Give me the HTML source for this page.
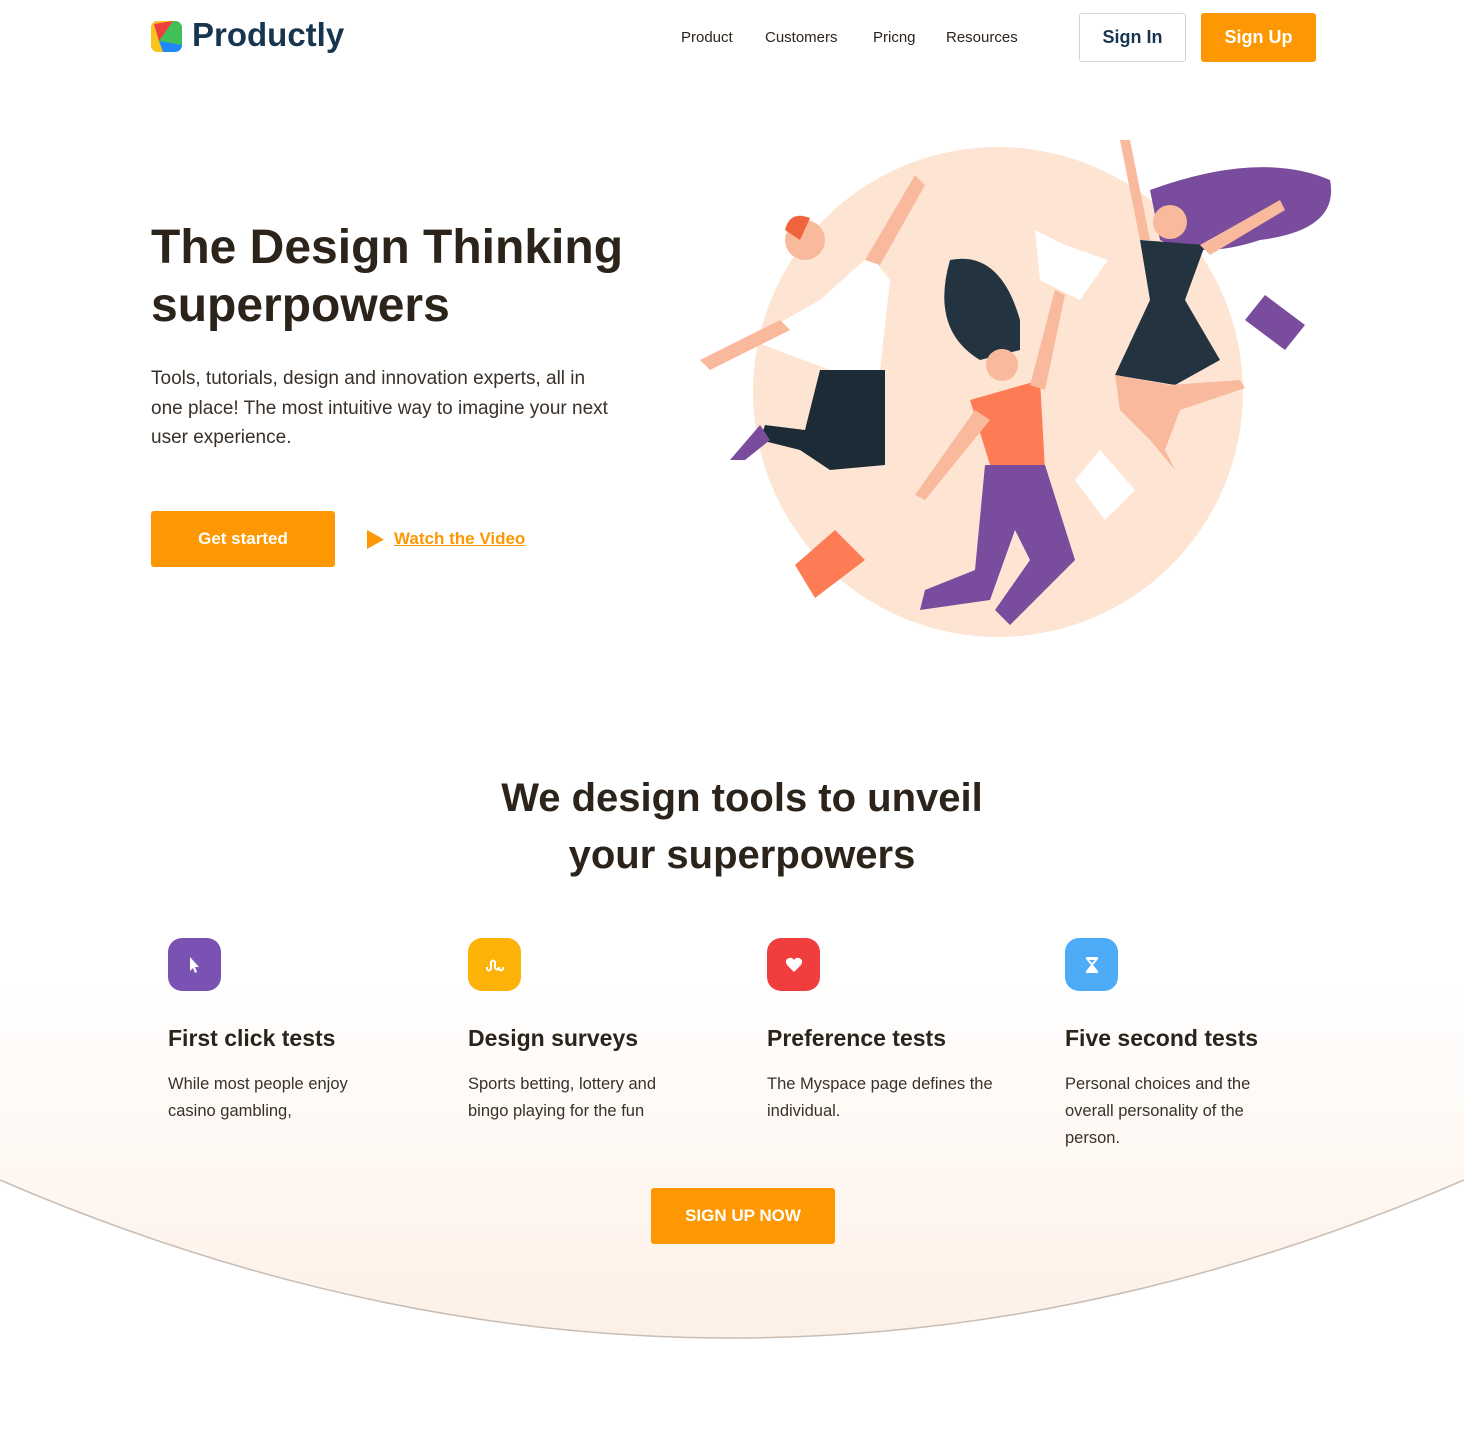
<!DOCTYPE html>
<html><head><meta charset="utf-8"><style>
*{margin:0;padding:0;box-sizing:border-box}
body{width:1464px;height:1440px;background:#fff;font-family:"Liberation Sans",sans-serif;color:#2c231b;position:relative;overflow:hidden}
.a{position:absolute}
nav a{position:absolute;top:29px;font-size:15px;color:#2c231b;text-decoration:none}
.btn{position:absolute;display:flex;align-items:center;justify-content:center;font-weight:bold;border-radius:3px}
h3{position:absolute;font-size:23px;font-weight:bold;top:1025px}
p.d{position:absolute;font-size:16.5px;line-height:27px;top:1071px;color:#3a3028}
.ic{position:absolute;top:938px;width:53px;height:53px;border-radius:14px;display:flex;align-items:center;justify-content:center}
</style></head><body>
<svg class="a" style="left:0;top:0" width="1464" height="1440">
<defs><linearGradient id="g" x1="0" y1="980" x2="0" y2="1340" gradientUnits="userSpaceOnUse"><stop offset="0" stop-color="#fff"/><stop offset="1" stop-color="#fdf0e6"/></linearGradient></defs>
<path d="M0,980 H1464 V1180 Q732,1496 0,1180 Z" fill="url(#g)"/>
<path d="M1464,1180 Q732,1496 0,1180" fill="none" stroke="#c8bdb5" stroke-width="1.5"/>
<circle cx="998" cy="392" r="245" fill="#fee5d3"/>
<path d="M750,340 L820,300 L870,255 L890,280 L880,370 L830,370 Z" fill="#fff"/>
<path d="M700,360 L780,320 L790,330 L710,370Z" fill="#f9b99c"/>
<path d="M865,260 L915,175 L925,185 L880,265Z" fill="#f9b99c"/>
<circle cx="805" cy="240" r="20" fill="#f9b99c"/><path d="M785,230 Q790,210 810,218 L800,240Z" fill="#f0643d"/>
<path d="M820,370 L885,370 L885,465 L830,470 L800,450 L760,440 L765,425 L805,430Z" fill="#1c2b36"/>
<path d="M730,460 L760,425 L770,440 L745,460Z" fill="#7a4c9e"/>
<path d="M950,260 Q1000,250 1020,320 L1020,350 L980,360 Q930,330 950,260Z" fill="#233440"/>
<circle cx="1002" cy="365" r="16" fill="#f9b99c"/>
<path d="M970,400 L1040,380 L1045,470 L990,465Z" fill="#fd7c55"/>
<path d="M1030,385 L1055,290 L1065,295 L1045,390Z" fill="#f9b99c"/>
<path d="M975,410 L915,495 L925,500 L990,420Z" fill="#f9b99c"/>
<path d="M985,465 L1045,465 L1075,560 L1010,625 L995,610 L1030,560 L1015,530 L990,600 L920,610 L925,590 L975,570Z" fill="#7a4c9e"/>
<path d="M1035,230 L1065,245 L1108,260 L1080,300 L1040,280Z" fill="#fff"/>
<path d="M1100,450 L1135,490 L1105,520 L1075,480Z" fill="#fff"/>
<path d="M1150,190 Q1260,150 1330,180 Q1340,230 1260,240 Q1200,260 1160,240Z" fill="#7a4c9e"/>
<circle cx="1170" cy="222" r="17" fill="#f9b99c"/>
<path d="M1140,240 L1205,245 L1185,300 L1220,360 L1175,385 L1115,375 L1150,300Z" fill="#233440"/>
<path d="M1115,375 L1170,385 L1240,380 L1245,388 L1180,410 L1165,450 L1175,470 L1150,440 L1120,410Z" fill="#f9b99c"/>
<path d="M1120,140 L1140,240 L1150,240 L1130,140Z" fill="#f9b99c"/>
<path d="M1200,245 L1280,200 L1285,210 L1210,255Z" fill="#f9b99c"/>
<path d="M1265,295 L1305,325 L1285,350 L1245,320Z" fill="#7a4c9e"/>
<path d="M795,565 L835,530 L865,560 L815,598Z" fill="#fd7c55"/>
</svg>

<div class="a" style="left:151px;top:21px;width:31px;height:31px;border-radius:7px;overflow:hidden;background:#1e88ff">
<svg width="31" height="31"><path d="M0,0H22L8,20L12,31H0Z" fill="#fcc419"/><path d="M3,3L22,0L8,20Z" fill="#f03e3e"/><path d="M22,0H31V24L8,20Z" fill="#40c057"/></svg></div>
<div class="a" style="left:192px;top:16px;font-size:33px;font-weight:bold;color:#183550">Productly</div>
<nav><a style="left:681px">Product</a><a style="left:765px">Customers</a><a style="left:873px">Pricng</a><a style="left:946px">Resources</a></nav>
<div class="btn" style="left:1079px;top:13px;width:107px;height:49px;border:1px solid #d0d4d8;color:#183550;font-size:18px">Sign In</div>
<div class="btn" style="left:1201px;top:13px;width:115px;height:49px;background:#fd9802;color:#fff;font-size:18px">Sign Up</div>

<div class="a" style="left:151px;top:219px;font-size:48px;font-weight:bold;line-height:58px;color:#2c231b">The Design Thinking<br>superpowers</div>
<div class="a" style="left:151px;top:364px;font-size:19px;line-height:29.5px;color:#3a3028;width:462px">Tools, tutorials, design and innovation experts, all in one place! The most intuitive way to imagine your next user experience.</div>
<div class="btn" style="left:151px;top:511px;width:184px;height:56px;background:#fd9802;color:#fff;font-size:17px">Get started</div>
<svg class="a" style="left:366px;top:530px" width="19" height="19"><path d="M1,0L18,9.5L1,19Z" fill="#fd9802"/></svg>
<div class="a" style="left:394px;top:529px;font-size:17px;font-weight:bold;color:#fd9802;text-decoration:underline">Watch the Video</div>

<div class="a" style="left:0;width:1484px;top:770px;text-align:center;font-size:40px;font-weight:bold;line-height:57px">We design tools to unveil<br>your superpowers</div>

<div class="ic" style="left:168px;background:#7952b3"><svg width="14" height="18"><path d="M2,1V15L5,12L7,17L9,16L7,11H11Z" fill="#fff"/></svg></div>
<div class="ic" style="left:468px;background:#fcb207"><svg width="20" height="14"><path d="M2,9V11Q4,14 6,11V4Q8,1 10,4V10Q12,13 14,10V9M14,11Q16,14 18,11V9" stroke="#fff" stroke-width="2" fill="none"/></svg></div>
<div class="ic" style="left:767px;background:#f03e3e"><svg width="18" height="16"><path d="M9,15L2,8Q-1,3 4,1Q7,0 9,3Q11,0 14,1Q19,3 16,8Z" fill="#fff"/></svg></div>
<div class="ic" style="left:1065px;background:#4dabf7"><svg width="14" height="18"><path d="M1,1H13V3L8,9L13,15V17H1V15L6,9L1,3Z" fill="#fff"/><path d="M4,4H10L7,7Z" fill="#4dabf7"/></svg></div>

<h3 style="left:168px">First click tests</h3>
<h3 style="left:468px">Design surveys</h3>
<h3 style="left:767px">Preference tests</h3>
<h3 style="left:1065px">Five second tests</h3>
<p class="d" style="left:168px;width:230px">While most people enjoy casino gambling,</p>
<p class="d" style="left:468px;width:225px">Sports betting, lottery and bingo playing for the fun</p>
<p class="d" style="left:767px;width:228px">The Myspace page defines the individual.</p>
<p class="d" style="left:1065px;width:230px">Personal choices and the overall personality of the person.</p>

<div class="btn" style="left:651px;top:1188px;width:184px;height:56px;background:#fd9802;color:#fff;font-size:17px">SIGN UP NOW</div>
</body></html>
